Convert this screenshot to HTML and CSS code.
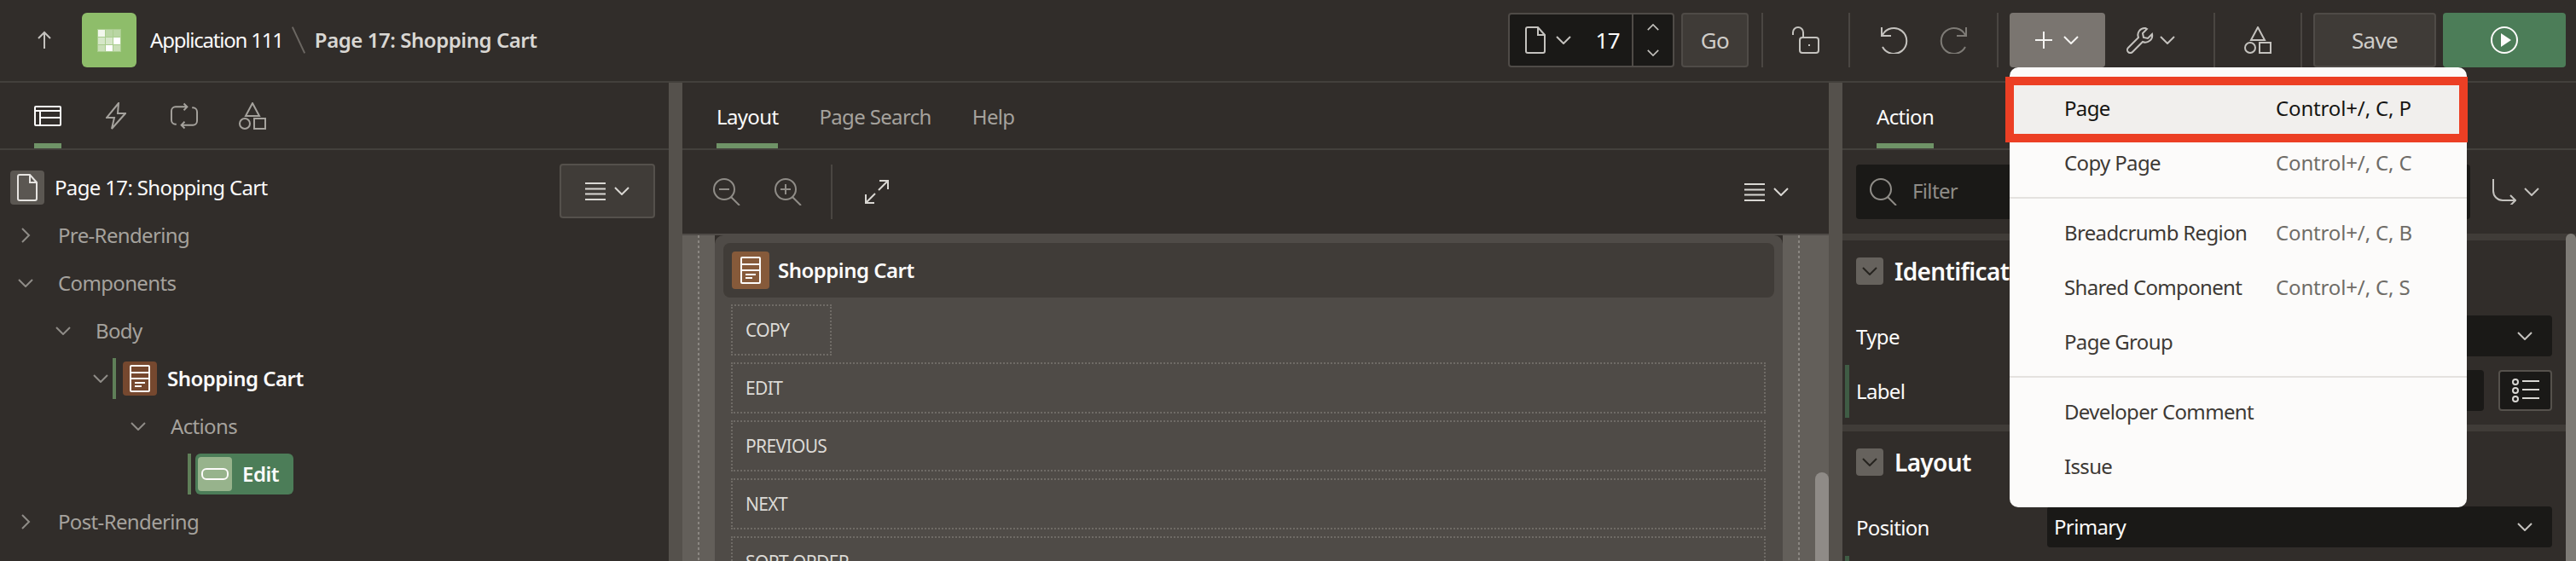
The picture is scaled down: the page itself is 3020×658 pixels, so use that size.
FILE: index.html
```html
<!DOCTYPE html>
<html lang="en">
  <head>
    <meta charset="UTF-8" />
    <title>Page 17: Shopping Cart</title>
    <link rel="stylesheet" href="styles.css">
  </head>
  <body>
    <svg class="sprite" xmlns="http://www.w3.org/2000/svg">
      <symbol id="i-down" viewBox="0 0 18 10"><path d="M1 1l8 8 8-8" /></symbol>
      <symbol id="i-up" viewBox="0 0 18 10"><path d="M1 9l8-8 8 8" /></symbol>
      <symbol id="i-right" viewBox="0 0 12 18"><path d="M2 1l8 8-8 8" /></symbol>
      <symbol id="i-back" viewBox="0 0 18 22"><path d="M9 21V2M2 9l7-7 7 7" /></symbol>
      <symbol id="i-doc" viewBox="0 0 24 32"><path d="M3 1h12l8 9v19a2 2 0 0 1-2 2H3a2 2 0 0 1-2-2V3a2 2 0 0 1 2-2zM15 1v9h8" /></symbol>
      <symbol id="i-lock" viewBox="0 0 32 32"><rect x="9" y="13" width="22" height="18" rx="3" /><path d="M1 10V7a6 6 0 0 1 12 0v6M20 21v2" /></symbol>
      <symbol id="i-undo" viewBox="0 0 32 32"><path d="M2 10A15 15 0 1 1 2 24M1 1v10h11" /></symbol>
      <symbol id="i-redo" viewBox="0 0 32 32"><path d="M30 10A15 15 0 1 0 30 24M31 1v10H20" /></symbol>
      <symbol id="i-plus" viewBox="0 0 20 20"><path d="M10 0v20M0 10h20" /></symbol>
      <symbol id="i-wrench" viewBox="0 0 32 32"><path d="M22 2a8 8 0 0 0-8 11L2 25a3.500 3.500 0 0 0 5 5l12-12a8 8 0 0 0 11-9l-5 5-5-1-1-5 5-5a8 8 0 0 0-2-1z" /></symbol>
      <symbol id="i-shapes" viewBox="0 0 32 32"><path d="M16 1l8 15H8z" /><circle cx="7" cy="25" r="6" /><rect x="18" y="19" width="13" height="12" /></symbol>
      <symbol id="i-play" viewBox="0 0 32 32"><circle cx="16" cy="16" r="15" /><path class="fill" d="M12 8l12 8-12 8z" /></symbol>
      <symbol id="i-tree" viewBox="0 0 32 24"><rect x="1" y="1" width="30" height="22" rx="1" /><path d="M1 6h30M7 6v17M7 14h24" /></symbol>
      <symbol id="i-bolt" viewBox="0 0 24 32"><path d="M15 1L1 18h9l-3 13 16-18h-9z" /></symbol>
      <symbol id="i-process" viewBox="0 0 33 32"><path d="M20 5H6a5 5 0 0 0-5 5v11a5 5 0 0 0 5 5h1M16 1l4 4-4 4M13 27h14a5 5 0 0 0 5-5V11a5 5 0 0 0-5-5h-1M17 31l-4-4 4-4" /></symbol>
      <symbol id="i-menu" viewBox="0 0 24 21"><path d="M0 1h24M0 7.500h24M0 13.500h24M0 20h24" /></symbol>
      <symbol id="i-zoom-out" viewBox="0 0 32 32"><circle cx="13" cy="13" r="12" /><path d="M21 22l10 10M7 13h12" /></symbol>
      <symbol id="i-zoom-in" viewBox="0 0 32 32"><circle cx="13" cy="13" r="12" /><path d="M21 22l10 10M7 13h12M13 7v12" /></symbol>
      <symbol id="i-expand" viewBox="0 0 28 28"><path d="M16 12L26 2M17 1h10v10M12 16L2 26M1 17v10h10" /></symbol>
      <symbol id="i-search" viewBox="0 0 32 32"><circle cx="13" cy="13" r="12" /><path d="M21 22l10 10" /></symbol>
      <symbol id="i-route" viewBox="0 0 28 30"><path d="M1 0v14a11 11 0 0 0 11 11h15M21 19l6 6-6 6" /></symbol>
      <symbol id="i-list" viewBox="0 0 32 28"><circle cx="4" cy="4" r="3" /><circle cx="4" cy="14" r="3" /><circle cx="4" cy="24" r="3" /><path d="M12 3h20M12 13h20M12 23h20" /></symbol>
      <symbol id="i-region" viewBox="0 0 24 32"><rect x="1" y="1" width="22" height="30" rx="1" /><path d="M1 9h22M1 16h22M6 21h12M6 25h8" /></symbol>
      <symbol id="i-button" viewBox="0 0 32 14"><rect x="1" y="1" width="30" height="12" rx="5" /></symbol>
    </svg>

    <header class="topbar">
      <svg class="ico back"><use href="#i-back" /></svg>
      <div class="app-icon">
        <svg width="28" height="27" viewBox="0 0 28 27">
          <rect width="28" height="27" fill="#a9cd8e" />
          <rect x="1" y="1" width="8" height="8" fill="#f2f7ec" />
          <rect x="10" y="1" width="8" height="8" fill="#b9d6a3" />
          <rect x="19" y="1" width="8" height="8" fill="#b9d6a3" />
          <rect x="1" y="10" width="8" height="8" fill="#d6e7c8" />
          <rect x="10" y="10" width="8" height="8" fill="#d6e7c8" />
          <rect x="19" y="10" width="8" height="8" fill="#ffffff" />
          <rect x="1" y="19" width="8" height="7" fill="#c9dfb7" />
          <rect x="10" y="19" width="8" height="7" fill="#ffffff" />
          <rect x="19" y="19" width="8" height="7" fill="#c9dfb7" />
        </svg>
      </div>
      <span class="crumb">Application 111</span>
      <span class="crumb-slash"></span>
      <span class="crumb crumb-page">Page 17: Shopping Cart</span>

      <div class="page-box">
        <svg class="ico doc"><use href="#i-doc" /></svg>
        <svg class="ico chev"><use href="#i-down" /></svg>
        <span class="page-num">17</span>
        <div class="spinner">
          <svg class="ico spin"><use href="#i-up" /></svg>
          <svg class="ico spin"><use href="#i-down" /></svg>
        </div>
      </div>
      <button class="btn btn-go">Go</button>
      <span class="sep sep-first"></span>
      <div class="tool tool-lock"><svg class="ico big"><use href="#i-lock" /></svg></div>
      <span class="sep"></span>
      <div class="tool tool-undo">
        <svg class="ico big"><use href="#i-undo" /></svg>
        <svg class="ico big dim"><use href="#i-redo" /></svg>
      </div>
      <span class="sep"></span>
      <div class="create-wrap">
        <button class="btn-create">
          <svg class="ico plus"><use href="#i-plus" /></svg>
          <svg class="ico chev"><use href="#i-down" /></svg>
        </button>
        <div class="menu">
          <div class="menu-item hot"><span class="menu-label">Page</span><span class="menu-key">Control+/, C, P</span><span class="callout"></span></div>
          <div class="menu-item"><span class="menu-label">Copy Page</span><span class="menu-key">Control+/, C, C</span></div>
          <div class="menu-sep"></div>
          <div class="menu-item"><span class="menu-label">Breadcrumb Region</span><span class="menu-key">Control+/, C, B</span></div>
          <div class="menu-item"><span class="menu-label">Shared Component</span><span class="menu-key">Control+/, C, S</span></div>
          <div class="menu-item"><span class="menu-label">Page Group</span></div>
          <div class="menu-sep"></div>
          <div class="menu-item"><span class="menu-label">Developer Comment</span></div>
          <div class="menu-item"><span class="menu-label">Issue</span></div>
        </div>
      </div>
      <div class="tool tool-wrench">
        <svg class="ico big"><use href="#i-wrench" /></svg>
        <svg class="ico chev"><use href="#i-down" /></svg>
      </div>
      <span class="sep"></span>
      <div class="tool tool-lock"><svg class="ico big"><use href="#i-shapes" /></svg></div>
      <span class="sep"></span>
      <button class="btn btn-save">Save</button>
      <button class="btn-run"><svg class="ico big"><use href="#i-play" /></svg></button>
    </header>

    <main class="workspace">
      <section class="panel">
        <div class="tabs tabs-icons">
          <div class="tab-icon active"><svg class="ico tree-ico"><use href="#i-tree" /></svg></div>
          <div class="tab-icon"><svg class="ico bolt"><use href="#i-bolt" /></svg></div>
          <div class="tab-icon tab-process"><svg class="ico big"><use href="#i-process" /></svg></div>
          <div class="tab-icon"><svg class="ico big"><use href="#i-shapes" /></svg></div>
        </div>
        <div class="tree-head">
          <span class="tree-badge"><svg class="ico doc"><use href="#i-doc" /></svg></span>
          <span class="tree-title">Page 17: Shopping Cart</span>
          <button class="btn-menu">
            <svg class="ico menu-ico"><use href="#i-menu" /></svg>
            <svg class="ico chev"><use href="#i-down" /></svg>
          </button>
        </div>
        <div class="tree-row lvl-0">
          <span class="toggle"><svg class="ico chev-r"><use href="#i-right" /></svg></span>
          <span class="tree-label">Pre-Rendering</span>
        </div>
        <div class="tree-row lvl-0">
          <span class="toggle"><svg class="ico chev"><use href="#i-down" /></svg></span>
          <span class="tree-label">Components</span>
        </div>
        <div class="tree-row lvl-1">
          <span class="toggle"><svg class="ico chev"><use href="#i-down" /></svg></span>
          <span class="tree-label">Body</span>
        </div>
        <div class="tree-row lvl-2">
          <span class="toggle"><svg class="ico chev"><use href="#i-down" /></svg></span>
          <span class="node-bar"></span>
          <span class="node-badge brown"><svg class="ico region-ico"><use href="#i-region" /></svg></span>
          <span class="node-text">Shopping Cart</span>
        </div>
        <div class="tree-row lvl-3">
          <span class="toggle"><svg class="ico chev"><use href="#i-down" /></svg></span>
          <span class="tree-label">Actions</span>
        </div>
        <div class="tree-row lvl-4">
          <span class="toggle"></span>
          <span class="node-bar"></span>
          <span class="node-pill">
            <span class="node-badge pale"><svg class="ico btn-ico"><use href="#i-button" /></svg></span>
            <span class="node-text">Edit</span>
          </span>
        </div>
        <div class="tree-row lvl-0">
          <span class="toggle"><svg class="ico chev-r"><use href="#i-right" /></svg></span>
          <span class="tree-label">Post-Rendering</span>
        </div>
      </section>

      <div class="splitter"></div>

      <section class="panel">
        <div class="tabs tabs-text">
          <div class="tab active">Layout</div>
          <div class="tab">Page Search</div>
          <div class="tab">Help</div>
        </div>
        <div class="layout-tools">
          <svg class="ico big faint"><use href="#i-zoom-out" /></svg>
          <svg class="ico big faint"><use href="#i-zoom-in" /></svg>
          <span class="tool-sep"></span>
          <svg class="ico expand"><use href="#i-expand" /></svg>
          <span class="tools-right">
            <svg class="ico menu-ico"><use href="#i-menu" /></svg>
            <svg class="ico chev"><use href="#i-down" /></svg>
          </span>
        </div>
        <div class="canvas">
          <div class="gutter"></div>
          <div class="page-region">
            <div class="region-head">
              <span class="head-badge"><svg class="ico region-ico"><use href="#i-region" /></svg></span>
              <span class="head-title">Shopping Cart</span>
            </div>
            <div class="slot slot-short">COPY</div>
            <div class="slot">EDIT</div>
            <div class="slot">PREVIOUS</div>
            <div class="slot">NEXT</div>
            <div class="slot">SORT ORDER</div>
          </div>
          <div class="gutter gutter-right"></div>
          <div class="canvas-scroll"></div>
        </div>
      </section>

      <div class="splitter"></div>

      <section class="panel">
        <div class="tabs tabs-text tabs-right">
          <div class="tab active">Action</div>
        </div>
        <div class="filter-bar">
          <div class="filter">
            <svg class="ico big faint"><use href="#i-search" /></svg>
            <span class="filter-text">Filter</span>
          </div>
          <svg class="ico route"><use href="#i-route" /></svg>
          <svg class="ico chev"><use href="#i-down" /></svg>
        </div>
        <div class="props">
          <div class="prop-head">
            <span class="collapse"><svg class="ico chev"><use href="#i-down" /></svg></span>
            <span class="prop-title">Identification</span>
          </div>
          <div class="prop-row">
            <span class="prop-label">Type</span>
            <div class="select"><svg class="ico chev"><use href="#i-down" /></svg></div>
          </div>
          <div class="prop-row row-label">
            <span class="prop-label">Label</span>
            <div class="input"></div>
            <span class="list-btn"><svg class="ico list"><use href="#i-list" /></svg></span>
          </div>
          <div class="prop-head prop-head-2">
            <span class="collapse"><svg class="ico chev"><use href="#i-down" /></svg></span>
            <span class="prop-title">Layout</span>
          </div>
          <div class="prop-row">
            <span class="prop-label">Position</span>
            <div class="select"><span class="select-text">Primary</span><svg class="ico chev"><use href="#i-down" /></svg></div>
          </div>
          <div class="prop-tail"></div>
          <div class="props-scroll"></div>
        </div>
      </section>
    </main>
  </body>
</html>
```

FILE: styles.css
```css
* {
  box-sizing: border-box;
}

html,
body {
  margin: 0;
  height: 658px;
  overflow: hidden;
}

body {
  background-color: #312d2a;
  color: #fcfbfa;
  font-family: "Noto Sans", "Open Sans", sans-serif;
  font-size: 24px;
  letter-spacing: -0.65px;
}

.sprite {
  display: none;
}

button {
  font: inherit;
  letter-spacing: inherit;
  padding: 0;
}

/* icons */
.ico {
  display: block;
  flex: none;
  fill: none;
  stroke: currentColor;
  stroke-width: 2;
  overflow: visible;
}
.fill {
  fill: currentColor;
  stroke: none;
}
.chev {
  width: 18px;
  height: 10px;
}
.chev-r {
  width: 12px;
  height: 18px;
}
.big {
  width: 32px;
  height: 32px;
}
.doc {
  width: 24px;
  height: 32px;
}
.dim {
  color: #7e7b76;
}
.faint {
  color: #8f8c87;
}

/* top bar */
.topbar {
  display: flex;
  align-items: center;
  height: 97px;
  padding: 0 12px 1px 0;
  border-bottom: 2px solid #43403c;
  color: #d9d7d3;
}
.back {
  width: 18px;
  height: 22px;
  margin-left: 43px;
  color: #c4c2be;
}
.app-icon {
  display: flex;
  align-items: center;
  justify-content: center;
  width: 64px;
  height: 64px;
  margin-left: 35px;
  border-radius: 6px;
  background-color: #8ebd6a;
}
.crumb {
  margin-bottom: 2px;
  margin-left: 16px;
  color: #fcfbfa;
  letter-spacing: -1.2px;
}
.crumb-slash {
  width: 2px;
  height: 34px;
  margin-left: 17px;
  background-color: #6b6762;
  transform: rotate(-25deg);
}
.crumb-page {
  margin-left: 18px;
  color: #d9d7d3;
  font-weight: 600;
  letter-spacing: -0.45px;
}
.page-box {
  display: flex;
  align-items: center;
  width: 195px;
  height: 64px;
  margin-left: auto;
  padding-left: 18px;
  border: 2px solid #4f4b47;
  border-radius: 4px;
  background-color: #1a1917;
  color: #c4c2be;
}
.page-box .chev {
  margin-left: 12px;
}
.page-num {
  width: 71px;
  padding-right: 14px;
  color: #fcfbfa;
  font-size: 26px;
  text-align: right;
}
.spinner {
  display: flex;
  flex-direction: column;
  align-items: center;
  justify-content: space-between;
  flex: 1;
  align-self: stretch;
  padding: 11px 0;
  border-left: 2px solid #4f4b47;
}
.spin {
  width: 14px;
  height: 8px;
}
.btn {
  height: 64px;
  border: 2px solid #4f4b47;
  border-radius: 4px;
  background-color: #3f3b37;
  color: #cfcdc9;
  font-size: 26px;
}
.btn-go {
  width: 79px;
  margin-left: 8px;
}
.sep {
  width: 2px;
  height: 64px;
  background-color: #4a4642;
}
.sep-first {
  margin-left: 15px;
}
.tool {
  display: flex;
  align-items: center;
  justify-content: center;
  color: #c4c2be;
}
.tool-lock {
  width: 100px;
}
.tool-undo {
  gap: 37px;
  width: 172px;
}
.tool-wrench {
  gap: 7px;
  justify-content: flex-start;
  width: 127px;
  padding-left: 25px;
}
.create-wrap {
  position: relative;
  margin-left: 13px;
}
.btn-create {
  display: flex;
  align-items: center;
  gap: 13px;
  width: 112px;
  height: 64px;
  padding-left: 30px;
  border: 0;
  border-radius: 4px;
  background-color: #7a7570;
  color: #f5f4f2;
}
.plus {
  width: 20px;
  height: 20px;
}
.btn-save {
  width: 144px;
  margin-left: 13px;
}
.btn-run {
  display: flex;
  align-items: center;
  justify-content: center;
  width: 144px;
  height: 64px;
  margin-left: 8px;
  border: 0;
  border-radius: 4px;
  background-color: #4c7d58;
  color: #fcfbfa;
}

/* create menu */
.menu {
  position: absolute;
  z-index: 5;
  top: 64px;
  left: 0;
  width: 536px;
  height: 516px;
  padding-top: 17px;
  border-radius: 10px;
  background-color: #fcfbfa;
}
.menu-item {
  position: relative;
  display: flex;
  align-items: center;
  height: 64px;
  padding: 0 0 4px 64px;
  color: #3d3935;
}
.menu-label {
  width: 248px;
}
.menu-key {
  color: #6f6c67;
  letter-spacing: -0.15px;
}
.hot {
  background-color: #f1efed;
  color: #161513;
}
.hot .menu-key {
  color: #161513;
}
.callout {
  position: absolute;
  top: -6px;
  right: -1px;
  bottom: -7px;
  left: -5px;
  border: 10px solid #ec3f24;
}
.menu-sep {
  height: 2px;
  margin: 7px 0 9px;
  background-color: #e4e2df;
}

/* panels */
.workspace {
  display: grid;
  grid-template-columns: 784px 16px 1344px 16px 860px;
  height: 561px;
}
.panel {
  position: relative;
  min-width: 0;
  overflow: hidden;
}
.splitter {
  background-color: #55514c;
}
.tabs {
  display: flex;
  height: 79px;
  border-bottom: 2px solid #43403c;
}
.tabs-icons {
  gap: 52px;
  padding-left: 40px;
}
.tabs-text {
  gap: 48px;
  padding-left: 40px;
}
.tab-icon {
  display: flex;
  align-items: center;
  height: 77px;
  padding-top: 6px;
  border-bottom: 6px solid transparent;
  color: #a5a29d;
}
.tab-process {
  margin-right: -4px;
}
.tab-icon.active,
.tab.active {
  border-bottom: 6px solid #6f9367;
  color: #fcfbfa;
}
.tree-ico {
  width: 32px;
  height: 24px;
}
.bolt {
  width: 24px;
  height: 32px;
}
.tab {
  height: 77px;
  padding-top: 22px;
  color: #a5a29d;
  line-height: 36px;
}

/* tree */
.tree-head {
  display: flex;
  align-items: flex-start;
  height: 72px;
  padding: 16px 16px 0 12px;
}
.tree-badge {
  display: flex;
  align-items: center;
  justify-content: center;
  width: 40px;
  height: 40px;
  margin-top: 8px;
  border-radius: 4px;
  background-color: #5b5752;
  color: #e6e4e1;
}
.tree-title {
  margin-top: 10px;
  margin-left: 12px;
  color: #fcfbfa;
  line-height: 36px;
}
.btn-menu {
  display: flex;
  align-items: center;
  justify-content: center;
  gap: 10px;
  width: 112px;
  height: 64px;
  margin-left: auto;
  border: 2px solid #55514c;
  border-radius: 4px;
  background-color: #403c38;
  color: #d9d7d3;
}
.menu-ico {
  width: 24px;
  height: 21px;
}
.tree-row {
  display: flex;
  align-items: center;
  height: 56px;
  color: #a5a29d;
}
.lvl-0 {
  padding-left: 12px;
}
.lvl-1 {
  padding-left: 56px;
}
.lvl-2 {
  padding-left: 100px;
}
.lvl-3 {
  padding-left: 144px;
}
.lvl-4 {
  padding-left: 188px;
}
.toggle {
  display: flex;
  align-items: center;
  justify-content: center;
  flex: none;
  width: 36px;
  color: #8f8c87;
}
.tree-label {
  margin-bottom: 2px;
  margin-left: 20px;
}
.node-bar {
  width: 4px;
  height: 48px;
  margin-left: -4px;
  background-color: #5f7f58;
}
.node-badge {
  display: flex;
  align-items: center;
  justify-content: center;
  width: 40px;
  height: 40px;
  border-radius: 4px;
  color: #fcfbfa;
}
.brown {
  margin-left: 8px;
  background-color: #76482f;
}
.pale {
  background-color: #97b38c;
}
.region-ico {
  width: 24px;
  height: 32px;
}
.node-text {
  margin-bottom: 2px;
  margin-left: 12px;
  color: #fcfbfa;
  font-weight: 600;
  letter-spacing: -0.5px;
}
.node-pill {
  display: flex;
  align-items: center;
  height: 48px;
  margin-left: 5px;
  padding: 0 17px 0 3px;
  border-radius: 6px;
  background-color: #4c7d58;
}
.btn-ico {
  width: 32px;
  height: 14px;
}

/* layout tab */
.layout-tools {
  display: flex;
  align-items: center;
  height: 98px;
  padding: 0 47px 0 36px;
}
.layout-tools .big + .big {
  margin-left: 40px;
}
.tool-sep {
  width: 2px;
  height: 64px;
  margin: 0 38px 0 34px;
  background-color: #4a4642;
}
.expand {
  width: 28px;
  height: 28px;
  color: #d9d7d3;
}
.tools-right {
  display: flex;
  align-items: center;
  gap: 10px;
  margin-left: auto;
  color: #d9d7d3;
}
.canvas {
  position: relative;
  display: flex;
  height: 384px;
  border-top: 2px solid #4f4b47;
}
.gutter {
  flex: none;
  width: 38px;
  background-color: #635f5a;
  background-image: linear-gradient(#8a8681 50%, transparent 50%);
  background-position: 18px 0;
  background-repeat: repeat-y;
  background-size: 2px 6px;
}
.gutter-right {
  width: 54px;
}
.canvas-scroll {
  position: absolute;
  top: 278px;
  right: 0;
  bottom: 0;
  width: 16px;
  border-radius: 8px 8px 0 0;
  background-color: #8f8b87;
}
.page-region {
  flex: 1;
  padding: 9px 0 0 10px;
  border-radius: 10px 10px 0 0;
  background-color: #4f4b47;
}
.region-head {
  display: flex;
  align-items: center;
  height: 64px;
  margin-right: 10px;
  padding-left: 10px;
  border-radius: 8px;
  background-color: #403c38;
}
.head-badge {
  display: flex;
  align-items: center;
  justify-content: center;
  width: 44px;
  height: 44px;
  border-radius: 4px;
  background-color: #865a3a;
  color: #fcfbfa;
}
.head-title {
  margin-bottom: 2px;
  margin-left: 10px;
  color: #fcfbfa;
  font-weight: 600;
  letter-spacing: -0.5px;
}
.slot {
  display: flex;
  align-items: center;
  height: 60px;
  margin: 8px 20px 0 9px;
  padding-left: 15px;
  border: 2px dotted #6f6b66;
  color: #dcdad6;
  font-size: 21px;
}
.slot-short {
  width: 118px;
}

/* property editor */
.filter-bar {
  display: flex;
  align-items: center;
  height: 98px;
  padding-left: 16px;
  color: #c4c2be;
}
.filter {
  display: flex;
  align-items: center;
  width: 720px;
  height: 64px;
  padding-left: 16px;
  border-radius: 4px;
  background-color: #1a1917;
}
.filter-text {
  margin-bottom: 4px;
  margin-left: 18px;
  color: #8f8c87;
}
.route {
  width: 28px;
  height: 30px;
  margin-left: 26px;
}
.filter-bar .chev {
  margin-left: 9px;
}
.props {
  position: relative;
  height: 384px;
  padding-right: 12px;
  border-top: 8px solid #403c38;
}
.props-scroll {
  position: absolute;
  top: -8px;
  right: 0;
  bottom: 0;
  width: 12px;
  border-radius: 6px 6px 0 0;
  background-color: #7e7b76;
}
.prop-head {
  display: flex;
  align-items: flex-start;
  height: 88px;
  padding: 20px 0 0 16px;
}
.collapse {
  display: flex;
  align-items: center;
  justify-content: center;
  width: 32px;
  height: 32px;
  border-radius: 4px;
  background-color: #66625d;
  color: #26231f;
}
.prop-title {
  margin-left: 13px;
  color: #fcfbfa;
  font-size: 28px;
  font-weight: 600;
  line-height: 32px;
}
.prop-row {
  display: flex;
  align-items: center;
  height: 48px;
  padding: 0 16px;
  color: #fcfbfa;
}
.prop-label {
  width: 224px;
}
.select,
.input {
  display: flex;
  align-items: center;
  justify-content: space-between;
  flex: 1;
  height: 48px;
  padding: 0 23px 0 8px;
  border-radius: 4px;
  background-color: #1a1917;
}
.select .chev {
  margin-left: auto;
  color: #c4c2be;
}
.select-text {
  margin-bottom: 2px;
}
.row-label {
  position: relative;
  margin-top: 16px;
}
.row-label::before {
  content: "";
  position: absolute;
  top: -6px;
  left: 3px;
  width: 5px;
  height: 62px;
  background-color: #3f5c45;
}
.list-btn {
  display: flex;
  align-items: center;
  justify-content: center;
  width: 63px;
  height: 48px;
  margin-left: 17px;
  border: 2px solid #55514c;
  border-radius: 4px;
  background-color: #1a1917;
  color: #d9d7d3;
}
.list {
  width: 32px;
  height: 28px;
}
.prop-head-2 {
  height: 96px;
  margin-top: 16px;
  border-top: 8px solid #403c38;
}
.prop-tail {
  width: 5px;
  height: 10px;
  margin: 10px 0 0 3px;
  background-color: #3f5c45;
}
```
